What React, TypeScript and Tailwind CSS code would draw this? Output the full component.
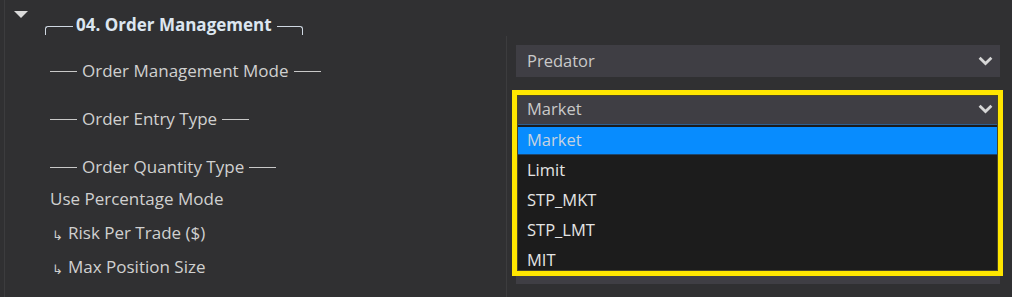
import React from 'react';

const Chevron = ({ className }: { className?: string }) => (
    <svg width="15" height="10" viewBox="0 0 15 10" className={className}>
        <polyline points="1.6,1.8 7.5,7.6 13.4,1.8" fill="none" stroke="#d6d6d6" strokeWidth="2.8" />
    </svg>
);

// Label with short rules on both sides
const SectionLabel = ({ text }: { text: string }) => (
    <div className="flex items-center gap-[5px]">
        <span className="w-[27px] h-px bg-[#c8c8c8]" />
        <span>{text}</span>
        <span className="w-[27px] h-px bg-[#c8c8c8]" />
    </div>
);

const SubLabel = ({ text }: { text: string }) => (
    <div className="flex items-center">
        <span className="font-['DejaVu_Sans',sans-serif] text-[13px] leading-none w-[18px] pl-[2px] mt-[5px] text-[#d0d0d0]">↳</span>
        <span>{text}</span>
    </div>
);

const options = ['Market', 'Limit', 'STP_MKT', 'STP_LMT', 'MIT'];

export default function App() {
    return (
        <div className="w-[1012px] h-[297px] bg-[#303032] pl-[4px] overflow-hidden font-['Open_Sans','Noto_Sans',sans-serif] text-[#d0d0d0]">
            <div className="h-full border-l border-[#3c3c3e] flex flex-col">
                {/* Header */}
                <div className="h-[36px] flex items-start shrink-0">
                    <div className="w-[40px] pl-[9px] pt-[11px]">
                        <div className="w-0 h-0 border-l-[7px] border-r-[7px] border-t-[7px] border-l-transparent border-r-transparent border-t-[#dadada]" />
                    </div>
                    <div className="mt-[26px] w-[28px] h-[9px] border-t border-l border-[#cfd8e2] rounded-tl-[3px]" />
                    <span className="ml-[3px] mt-[15px] text-[17px] leading-[20px] font-bold text-[#dce6f0]">04. Order Management</span>
                    <div className="ml-[5px] mt-[26px] w-[26px] h-[9px] border-t border-r border-[#cfd8e2] rounded-tr-[3px]" />
                </div>

                {/* Body */}
                <div className="flex flex-1 min-h-0">
                    <div className="w-[501px] shrink-0 flex flex-col text-[17px] pl-[45px] pt-[19px]">
                        <div className="h-[32px] flex items-center">
                            <SectionLabel text="Order Management Mode" />
                        </div>
                        <div className="h-[32px] flex items-center mt-[16px]">
                            <SectionLabel text="Order Entry Type" />
                        </div>
                        <div className="h-[32px] flex items-center mt-[16px]">
                            <SectionLabel text="Order Quantity Type" />
                        </div>
                        <div className="h-[32px] flex items-center">Use Percentage Mode</div>
                        <div className="h-[32px] flex items-center mt-[2px]">
                            <SubLabel text="Risk Per Trade ($)" />
                        </div>
                        <div className="h-[32px] flex items-center mt-[2px]">
                            <SubLabel text="Max Position Size" />
                        </div>
                    </div>

                    <div className="flex-1 border-l border-[#3c3c3e] flex flex-col text-[16.5px]">
                        <div className="mt-[9px] ml-[9px] mr-[12px] h-[32px] bg-[#3f3e44] flex items-center justify-between pl-[11px] pr-[7px] text-[#c9c9c9]">
                            <span>Predator</span>
                            <Chevron />
                        </div>

                        {/* Open dropdown, highlighted */}
                        <div className="mt-[13px] ml-[5px] mr-[9px] h-[186px] border-[5px] border-[#ffe600] shrink-0">
                            <div className="h-full border border-[#4a4626] flex flex-col">
                                <div className="h-[29px] shrink-0 bg-[#3f3e44] border-b border-[#2d5f91] flex items-center justify-between pl-[9px] pr-[4px] pb-[2px] text-[#c9c9c9]">
                                    <span>Market</span>
                                    <Chevron />
                                </div>
                                <div className="flex-1 min-h-0 overflow-hidden bg-[#1c1c1c] pt-[2px]">
                                    {options.map((o, i) => (
                                        <div
                                            key={o}
                                            className={i === 0
                                                ? 'h-[28px] flex items-center pl-[9px] bg-[#088cfe] border-b border-[#1d466e] text-[#c6d3e0]'
                                                : 'h-[30px] flex items-center pl-[9px] text-[#e4e4e4]'}
                                        >
                                            {o}
                                        </div>
                                    ))}
                                </div>
                            </div>
                        </div>
                        <div className="ml-[9px] mr-[12px] h-[8px] bg-[#3f3e44] shrink-0" />
                    </div>
                </div>
            </div>
        </div>
    );
}
